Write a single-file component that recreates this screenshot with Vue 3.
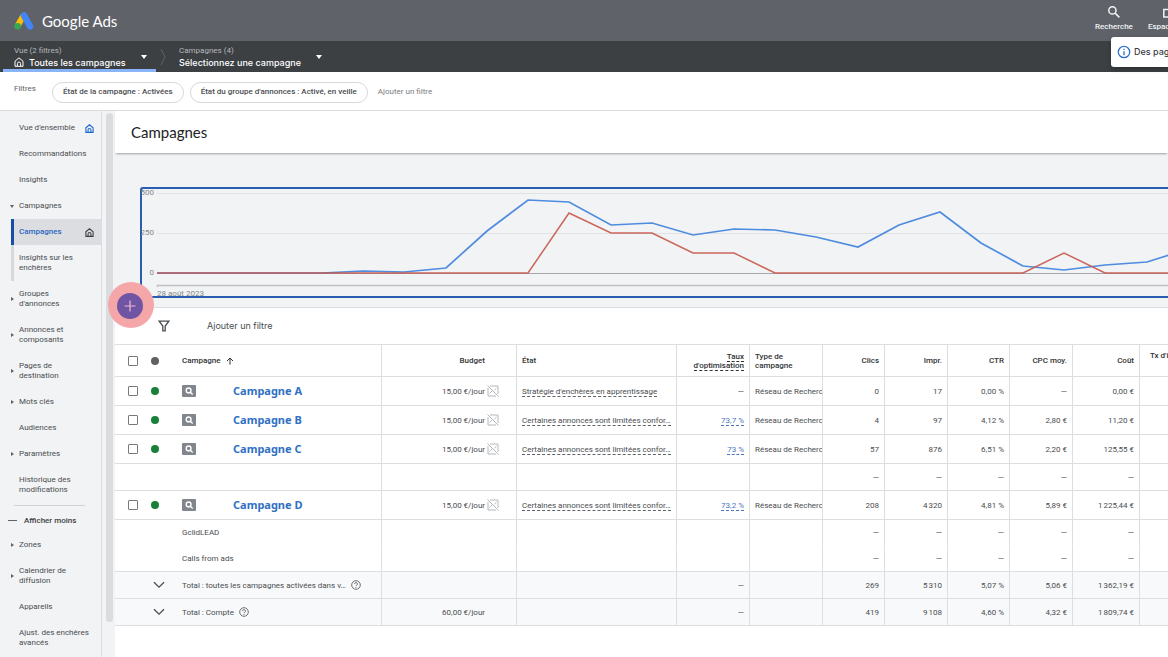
<script setup>
const navMain = [
  { label: "Vue d'ensemble", home: true },
  { label: 'Recommandations' },
  { label: 'Insights' },
  { label: 'Campagnes', arrow: 'down' },
  { label: 'Campagnes', home: true, active: true, sub: true },
  { label: 'Insights sur les enchères', sub: true },
  { label: "Groupes d'annonces", arrow: 'right' },
  { label: 'Annonces et composants', arrow: 'right' },
  { label: 'Pages de destination', arrow: 'right' },
  { label: 'Mots clés', arrow: 'right' },
  { label: 'Audiences' },
  { label: 'Paramètres', arrow: 'right' },
  { label: 'Historique des modifications' }
]
const navMore = [
  { label: 'Zones', arrow: 'right' },
  { label: 'Calendrier de diffusion', arrow: 'right' },
  { label: 'Appareils' },
  { label: 'Ajust. des enchères avancés', wide: true }
]
const limited = 'Certaines annonces sont limitées confor…'
const network = 'Réseau de Recherche'
const rows = [
  { kind: 'campaign', name: 'Campagne A', budget: '15,00 €/jour', state: "Stratégie d'enchères en apprentissage", score: '—', type: network, nums: ['0', '17', '0,00 %', '—', '0,00 €'] },
  { kind: 'campaign', name: 'Campagne B', budget: '15,00 €/jour', state: limited, score: '73,7 %', type: network, nums: ['4', '97', '4,12 %', '2,80 €', '11,20 €'] },
  { kind: 'campaign', name: 'Campagne C', budget: '15,00 €/jour', state: limited, score: '73 %', type: network, nums: ['57', '876', '6,51 %', '2,20 €', '125,55 €'] },
  { kind: 'detail', name: '', nums: ['—', '—', '—', '—', '—'] },
  { kind: 'campaign', name: 'Campagne D', budget: '15,00 €/jour', state: limited, score: '73,2 %', type: network, nums: ['208', '4\u202f320', '4,81 %', '5,89 €', '1\u202f225,44 €'] },
  { kind: 'detail', open: true, name: 'GclidLEAD', nums: ['—', '—', '—', '—', '—'] },
  { kind: 'detail', name: 'Calls from ads', nums: ['—', '—', '—', '—', '—'] },
  { kind: 'total', name: 'Total : toutes les campagnes activées dans v…', budget: '', score: '—', nums: ['269', '5\u202f310', '5,07 %', '5,06 €', '1\u202f362,19 €'] },
  { kind: 'total', name: 'Total : Compte', budget: '60,00 €/jour', score: '—', nums: ['419', '9\u202f108', '4,60 %', '4,32 €', '1\u202f809,74 €'] }
]
const clicks = '15,84 180,84 221,82 262,83 304,79 345,42 386,11 427,13 469,36 510,34 551,46 592,40 633,41 674,48 716,58 757,36 798,23 839,54 881,77 922,81 963,76 1005,73 1027,66'
const conversions = '15,84 386,84 427,24 469,44 510,44 551,64 592,64 633,84 881,84 922,64 963,84 1027,84'
</script>

<template>
  <div class="page">
    <header class="top">
      <a class="brand" href="#">
        <svg class="logo" viewBox="0 0 20 18" aria-hidden="true">
          <path d="M9.4 3.6 3.6 14" stroke="#fbbc04" stroke-width="6" />
          <path d="M10 3.4 16 14.4" stroke="#4285f4" stroke-width="6.4" stroke-linecap="round" />
          <circle cx="3.7" cy="14.3" r="3.3" fill="#34a853" stroke="none" />
        </svg>
        <span>Google Ads</span>
      </a>
      <div class="tools">
        <button class="tool" type="button">
          <svg viewBox="0 0 12 12" aria-hidden="true"><circle cx="4.4" cy="4.4" r="3.6" /><path d="M7.1 7.1 11.4 11.4" /></svg>
          <span>Recherche</span>
        </button>
        <button class="tool" type="button">
          <svg viewBox="0 0 12 12" aria-hidden="true"><path d="M11 3.4H.8V11H11" /></svg>
          <span>Espace pub</span>
        </button>
      </div>
      <div class="notice" role="status">
        <svg viewBox="0 0 14 14" aria-hidden="true"><circle cx="7" cy="7" r="5.7" /><path d="M7 6.3V10.2M7 3.8V5.1" /></svg>
        <span>Des pages</span>
      </div>
    </header>

    <div class="scope">
      <button class="picker current" type="button">
        <span class="lines">
          <span class="hint">Vue (2 filtres)</span>
          <span class="value">
            <svg class="house" viewBox="0 0 10 10" aria-hidden="true"><path d="M1 4.2 5 .9 9 4.2V9.3H1Z" /><path d="M3.4 9V6.6a1.6 1.6 0 0 1 3.2 0V9" /></svg>
            Toutes les campagnes
          </span>
        </span>
        <i class="caret"></i>
      </button>
      <svg class="sep" viewBox="0 0 6 18" aria-hidden="true"><path d="M1 1 5 9 1 17" /></svg>
      <button class="picker" type="button">
        <span class="lines">
          <span class="hint">Campagnes (4)</span>
          <span class="value">Sélectionnez une campagne</span>
        </span>
        <i class="caret"></i>
      </button>
    </div>

    <div class="filters">
      <span class="filters-label">Filtres</span>
      <button class="chip" type="button">État de la campagne : Activées</button>
      <button class="chip" type="button">État du groupe d'annonces : Activé, en veille</button>
      <button class="add" type="button">Ajouter un filtre</button>
    </div>

    <div class="body">
      <nav class="side">
        <a v-for="(n, i) in navMain" :key="i" href="#" class="item" :class="{ sub: n.sub, active: n.active }">
          <i v-if="n.arrow" class="arrow" :class="n.arrow"></i>
          <span class="item-text">{{ n.label }}</span>
          <svg v-if="n.home" class="house" viewBox="0 0 10 10" aria-hidden="true"><path d="M1 4.2 5 .9 9 4.2V9.3H1Z" /><path d="M3.4 9V6.6a1.6 1.6 0 0 1 3.2 0V9" /></svg>
        </a>
        <button class="less" type="button"><i></i>Afficher moins</button>
        <a v-for="n in navMore" :key="n.label" href="#" class="item" :class="{ wide: n.wide }">
          <i v-if="n.arrow" class="arrow" :class="n.arrow"></i>
          <span class="item-text">{{ n.label }}</span>
        </a>
      </nav>
      <div class="track"><div class="thumb"></div></div>

      <main>
        <h1>Campagnes</h1>
        <section class="graph">
          <div class="frame">
            <svg viewBox="0 0 1026 107" preserveAspectRatio="none" aria-hidden="true">
              <path class="grid" d="M15 4.5H1027M15 44.5H1027" />
              <path class="axis" d="M15 84.5H1027" />
              <path class="base" d="M15.5 98V96.5H1027" />
              <polyline class="blue" :points="clicks" />
              <polyline class="red" :points="conversions" />
            </svg>
            <span class="tick t500">500</span>
            <span class="tick t250">250</span>
            <span class="tick t0">0</span>
            <span class="date">28 août 2023</span>
          </div>
          <button class="fab" type="button" aria-label="Créer une campagne">
            <svg viewBox="0 0 26 26" aria-hidden="true"><circle cx="13" cy="13" r="13" /><path d="M13 7.5V18.5M7.5 13H18.5" /></svg>
          </button>
        </section>
        <div class="toolbar">
          <svg viewBox="0 0 12 12" aria-hidden="true"><path d="M1.2 1.2H10.8L7.2 6V10.8H4.8V6Z" /></svg>
          <button type="button">Ajouter un filtre</button>
        </div>

        <table>
          <colgroup>
            <col class="c-check"><col class="c-dot"><col class="c-name"><col class="c-budget"><col class="c-state">
            <col class="c-score"><col class="c-type"><col class="c-clicks"><col class="c-num"><col class="c-ctr"><col class="c-num"><col class="c-cost"><col>
          </colgroup>
          <thead>
            <tr>
              <th class="plain check"><input type="checkbox" aria-label="Tout sélectionner"></th>
              <th class="plain"><i class="dot grey"></i></th>
              <th class="name">
                <span class="sorted">Campagne
                  <svg viewBox="0 0 8 8" aria-hidden="true"><path d="M4 7.6V1M1 4 4 1 7 4" /></svg>
                </span>
              </th>
              <th class="right budget">Budget</th>
              <th>État</th>
              <th class="right"><span class="dash">Taux<br>d'optimisation</span></th>
              <th>Type de<br>campagne</th>
              <th class="right">Clics</th>
              <th class="right">Impr.</th>
              <th class="right">CTR</th>
              <th class="right">CPC moy.</th>
              <th class="right">Coût</th>
              <th class="last">Tx d'interaction</th>
            </tr>
          </thead>
          <tbody>
            <tr v-for="(r, i) in rows" :key="i" :class="[r.kind, { open: r.open }]">
              <template v-if="r.kind === 'campaign'">
                <td class="plain check"><input type="checkbox" :aria-label="r.name"></td>
                <td class="plain"><i class="dot"></i></td>
              </template>
              <td v-else colspan="2" class="plain fold">
                <button v-if="r.kind === 'total'" type="button" :aria-label="r.name">
                  <svg viewBox="0 0 12 8" aria-hidden="true"><path d="M1 1.2 6 6.2 11 1.2" /></svg>
                </button>
              </td>
              <td class="name">
                <div v-if="r.kind === 'campaign'" class="campaign-cell">
                  <svg viewBox="0 0 14 12" aria-hidden="true">
                    <rect width="14" height="12" rx="1" />
                    <circle cx="6.6" cy="5.4" r="2.4" /><path d="M8.4 7.2 10.6 9.4" />
                  </svg>
                  <a href="#">{{ r.name }}</a>
                </div>
                <div v-else class="label-cell">
                  <span>{{ r.name }}</span>
                  <svg v-if="r.kind === 'total'" viewBox="0 0 10 10" aria-hidden="true"><circle cx="5" cy="5" r="4.3" /><path d="M3.6 4a1.4 1.4 0 1 1 2.1 1.2Q5 5.6 5 6.3M5 7V7.8" /></svg>
                </div>
              </td>
              <td class="right budget">
                <span v-if="r.budget" class="money">{{ r.budget }}<svg v-if="r.kind === 'campaign'" viewBox="0 0 12 12" aria-hidden="true"><path d="M3 1H11V9M9 11H1V3M.5.5 11.5 11.5M2.5 8.5 5 6M7.5 5 9.5 3.2" /></svg></span>
              </td>
              <td class="state-cell"><span v-if="r.state" class="state">{{ r.state }}</span></td>
              <td class="right">
                <a v-if="r.kind === 'campaign' && r.score !== '—'" class="score" href="#">{{ r.score }}</a>
                <template v-else>{{ r.score }}</template>
              </td>
              <td class="type">{{ r.type }}</td>
              <td v-for="(v, j) in r.nums" :key="j" class="right">{{ v }}</td>
              <td class="last"></td>
            </tr>
          </tbody>
        </table>
      </main>
    </div>
  </div>
</template>

<style>
body { margin: 0; background: #fff; }
</style>

<style scoped>
.page { min-height: 100vh; display: flex; flex-direction: column; overflow: hidden; font: 8px/10px Roboto, "Liberation Sans", sans-serif; color: #4a4d51; box-sizing: border-box; }
.page *, .page *::before { box-sizing: border-box; }
button { font: inherit; color: inherit; background: none; border: 0; padding: 0; margin: 0; cursor: pointer; }
a { color: inherit; text-decoration: none; }
svg { fill: none; stroke: currentColor; flex: none; display: block; }

.top { position: relative; height: 41px; background: #5f6269; color: #fff; display: flex; align-items: center; justify-content: space-between; padding-left: 14px; }
.brand { display: flex; align-items: center; gap: 8px; font: 15px/20px Lato, sans-serif; }
.logo { width: 20px; height: 18px; }
.tools { display: flex; gap: 15px; width: 73px; overflow: hidden; align-self: stretch; padding-top: 6px; }
.tool { flex: none; display: flex; flex-direction: column; align-items: center; gap: 4px; font-weight: 500; color: #f1f3f4; }
.tool svg { width: 12px; height: 12px; stroke-width: 1.5; }
.notice { position: absolute; z-index: 2; right: 0; top: 37px; width: 57px; height: 30px; background: #fff; border-radius: 3px 0 0 3px; box-shadow: 0 2px 5px rgba(0, 0, 0, .25); display: flex; align-items: center; gap: 3px; padding-left: 6px; overflow: hidden; white-space: nowrap; font: 500 9px/12px Inter, sans-serif; color: #3c4043; }
.notice svg { width: 14px; height: 14px; stroke: #2f6fd0; stroke-width: 1.3; }

.scope { height: 31px; background: #3c4043; color: #fff; display: flex; align-items: stretch; padding-left: 3px; }
.picker { display: flex; align-items: center; text-align: left; padding: 1px 10px 0 11px; gap: 15px; }
.picker.current { border-bottom: 3px solid #8ab4f8; padding-top: 3px; width: 153px; justify-content: space-between; }
.lines { display: flex; flex-direction: column; gap: 1px; }
.hint { color: #b4b7bb; }
.value { display: flex; align-items: center; gap: 5px; font: 500 9px/11px Inter, sans-serif; white-space: nowrap; }
.value .house { width: 10px; height: 10px; }
.house { width: 9px; height: 9px; }
.caret { border: 3px solid transparent; border-top: 4px solid #fff; border-bottom: 0; }
.sep { width: 6px; height: 18px; align-self: center; margin: 0 2px 0 4px; stroke: #5f6368; }

.filters { height: 39px; border-bottom: 1px solid #dadce0; display: flex; align-items: center; padding: 2px 0 0 14px; background: #fff; }
.filters-label { width: 38px; padding-bottom: 6px; color: #5f6368; }
.chip { height: 21px; border: 1px solid #d5d7da; border-radius: 11px; padding: 0 10px; margin-right: 6px; font-weight: 500; white-space: nowrap; }
.add { color: #777b80; margin-left: 4px; }

.body { flex: 1; display: flex; align-items: stretch; background: #f1f3f4; }
.side { width: 102px; flex: none; border-right: 1px solid #dcdee1; padding-top: 4px; }
.item { position: relative; display: flex; align-items: center; justify-content: space-between; padding: 8px 7px 8px 19px; }
.item-text { max-width: 62px; }
.item:nth-child(2) .item-text, .item.wide .item-text { max-width: 76px; }
.item.wide { padding-right: 5px; }
.item .house { color: #3c4043; stroke-width: 1.2; }
.item:first-child .house { color: #1a66d0; }
.item.sub::before { content: ""; position: absolute; left: 11px; top: 0; bottom: 0; width: 3px; background: #d6d8db; }
.item.active { color: #2a66c0; font-weight: 500; background: linear-gradient(90deg, transparent 11px, #dcdde1 11px); }
.item.active::before { background: #174ea6; }
.arrow { position: absolute; left: 11px; top: 50%; margin-top: -2px; border: 2px solid transparent; }
.arrow.right { border-left: 3px solid #5f6368; border-right: 0; }
.arrow.down { border-top: 3px solid #5f6368; border-bottom: 0; left: 10px; margin-top: -1px; }
.less { position: relative; width: 100%; height: 29px; padding-top: 6px; display: flex; align-items: center; gap: 7px; padding-left: 8px; font-weight: 500; color: #3c4043; }
.less::before { content: ""; position: absolute; left: 14px; right: 16px; top: 2px; border-top: 1px solid #d0d2d5; }
.less i { width: 9px; border-top: 1px solid #5f6368; }
.track { width: 13px; flex: none; padding: 2px 2px 35px 4px; }
.thumb { height: 100%; width: 7px; border-radius: 4px; background: #dadce0; }

main { flex: 1; min-width: 0; background: #fff; }
h1 { position: relative; z-index: 1; margin: 0; height: 42px; background: #fff; box-shadow: 0 2px 2px -1px rgba(0, 0, 0, .35); padding-left: 16px; font: 400 15px/42px Lato, sans-serif; color: #202124; }
.graph { position: relative; height: 155px; padding: 34px 0 0 25px; background: #f1f3f4; border-bottom: 1px solid #dadce0; }
.frame { position: relative; height: 111px; border: 2px solid #2a5db0; border-right: 0; border-radius: 3px 0 0 3px; }
.frame svg { width: 100%; height: 107px; }
.frame svg > * { vector-effect: non-scaling-stroke; }
.grid { stroke: #e0e2e4; }
.axis { stroke: #a5a7aa; }
.base { stroke: #bfc1c3; stroke-width: 1.5; }
.blue { stroke: #4f8cdf; stroke-width: 1.7; }
.red { stroke: #c8554b; stroke-width: 1.5; stroke-opacity: .9; }
.tick, .date { position: absolute; line-height: 8px; color: #85888c; }
.tick { right: calc(100% - 12px); }
.t500 { top: 0; }
.t250 { top: 40px; }
.t0 { top: 80px; }
.date { left: 15px; bottom: -2px; }
.fab { position: absolute; left: -7px; bottom: -21px; width: 46px; height: 46px; border-radius: 50%; background: #f5a6a9; padding: 2px 0 0 9px; z-index: 1; }
.fab svg { width: 26px; height: 26px; }
.fab circle { fill: #7055a5; stroke: none; }
.fab path { stroke: #f3b6d0; stroke-width: 1.2; }
.toolbar { height: 36px; display: flex; align-items: center; gap: 37px; padding-left: 43px; font: 9px/12px Inter, sans-serif; }
.toolbar svg { width: 12px; height: 12px; stroke-width: 1.3; }

table { width: 100%; table-layout: fixed; border-collapse: separate; border-spacing: 0; border-top: 1px solid #dcdfe1; line-height: 9px; }
.c-check { width: 29px; }
.c-dot { width: 22px; }
.c-name { width: 216px; }
.c-budget { width: 135px; }
.c-state { width: 160px; }
.c-score, .c-type { width: 73px; }
.c-clicks, .c-ctr { width: 62px; }
.c-num { width: 63px; }
.c-cost { width: 67px; }
th, td { padding: 0 5px; text-align: left; border-right: 1px solid #dcdfe1; border-bottom: 1px solid #dcdfe1; overflow: hidden; }
th { height: 32px; font-weight: 500; color: #303336; }
.plain { border-right: 0; }
.name { padding: 0 9px 0 16px; }
.right { text-align: right; }
.right.budget { padding-right: 31px; }
.type { white-space: nowrap; padding-right: 0; }
.last { border-right: 0; white-space: nowrap; padding: 6px 0 0 10px; vertical-align: top; }
.check { padding: 0 0 0 13px; }
.plain input { appearance: none; display: block; margin: 0; width: 10px; height: 10px; border: 1px solid #77797c; border-radius: 1px; background: #fff; }
.dot { display: block; width: 8px; height: 8px; margin-left: 2px; border-radius: 50%; background: #188038; }
.plain:has(.dot) { padding: 0 5px; }
.dot.grey { background: #5f6163; }
.sorted { display: flex; align-items: center; gap: 5px; }
.sorted svg { width: 8px; height: 8px; }
.campaign td { height: 29px; }
.detail td { height: 27px; }
.detail.open td { border-bottom-color: transparent; }
.detail.open td, .detail.open + .detail td { height: 26px; }
.total td { height: 27px; background: #f8f9fa; }
.campaign-cell { display: flex; align-items: center; gap: 37px; }
.campaign-cell svg { width: 14px; height: 12px; stroke: #fff; stroke-width: 1.4; }
.campaign-cell rect { fill: #80868b; stroke: none; }
.campaign-cell a { font: 700 11px/16px "Noto Sans", "Open Sans", sans-serif; color: #3070c4; }
.label-cell { display: flex; align-items: center; gap: 5px; white-space: nowrap; }
.label-cell svg { width: 10px; height: 10px; stroke-width: .8; }
.fold { padding: 0 1px 0 0; }
.fold button { display: block; margin-left: auto; }
.fold svg { width: 12px; height: 8px; stroke-width: 1.3; }
.money { position: relative; white-space: nowrap; }
.money svg { position: absolute; left: calc(100% + 2px); top: -2px; width: 12px; height: 12px; stroke: #b5b7ba; stroke-width: 1; }
.dash, .score { border-bottom: 1px dashed currentColor; }
.state-cell { padding-right: 0; white-space: nowrap; }
.state { border-bottom: 1px dashed #5f6368; }
.score { color: #4a73c0; }
</style>
